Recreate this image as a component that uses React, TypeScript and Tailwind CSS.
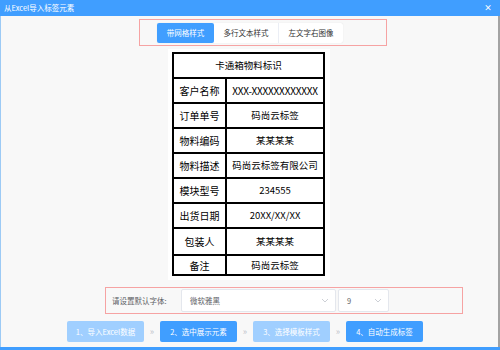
import React from 'react';

const rows: { label: string; value: string; h: string; valueClass?: string }[] = [
  { label: '客户名称', value: 'XXX-XXXXXXXXXXXX', h: 'h-[25px]', valueClass: 'text-[10px] tracking-[-0.2px]' },
  { label: '订单单号', value: '码尚云标签', h: 'h-[25px]' },
  { label: '物料编码', value: '某某某某', h: 'h-[25px]' },
  { label: '物料描述', value: '码尚云标签有限公司', h: 'h-[25px]' },
  { label: '模块型号', value: '234555', h: 'h-[25px]' },
  { label: '出货日期', value: '20XX/XX/XX', h: 'h-[25px]' },
  { label: '包装人', value: '某某某某', h: 'h-[27px]' },
];

const Chevron = () => (
  <svg width="8" height="5" viewBox="0 0 8 5" fill="none" stroke="#c0c4cc" strokeWidth="0.8">
    <path d="M1 1l3 3 3-3" />
  </svg>
);

const steps = [
  { text: '1、导入Excel数据', active: false },
  { text: '2、选中展示元素', active: true },
  { text: '3、选择模板样式', active: false },
  { text: '4、自动生成标签', active: true },
];

export default function App() {
  return (
    <div
      className="w-[500px] h-[350px] flex flex-col bg-[#f8f8f8] overflow-hidden"
      style={{ fontFamily: '"Noto Sans CJK SC", "Noto Sans", sans-serif' }}
    >
      <div className="h-[16px] shrink-0 bg-[#409eff] flex items-center justify-between pl-[4px] pr-[8px]">
        <span className="text-white text-[7.5px] leading-none">从Excel导入标签元素</span>
        <span className="text-white text-[8px] font-bold leading-none">×</span>
      </div>

      <div className="flex-1 flex flex-col border-l border-l-[#9ccaf5] border-r-2 border-r-[#a3a3a3]">
        {/* template style tabs */}
        <div className="mt-[3px] ml-[138px] w-[248px] h-[27px] border border-[#f6a3a3] flex items-start pt-[3px] pl-[17px]">
          <div className="flex bg-white rounded-[2px] shadow-[0_0_1px_rgba(0,0,0,0.15)]">
            <div className="w-[57px] h-[20px] bg-[#409eff] rounded-[2px] flex items-center justify-center text-white text-[7.5px]">
              带网格样式
            </div>
            <div className="w-[65px] h-[20px] border-r border-[#ebeef5] flex items-center justify-center text-[#333] text-[7.5px]">
              多行文本样式
            </div>
            <div className="w-[64px] h-[20px] flex items-center justify-center text-[#333] text-[7.5px]">
              左文字右图像
            </div>
          </div>
        </div>

        {/* label preview */}
        <div className="mt-[3px] ml-[167px] w-[162px] h-[231px] bg-white pt-[3px] pl-[4px]">
          <div className="w-[153px] border-2 border-black text-black">
            <div className="h-[25px] border-b-2 border-black flex items-center justify-center text-[9.5px]">
              卡通箱物料标识
            </div>
            {rows.map((r) => (
              <div key={r.label} className={`${r.h} border-b-2 border-black flex`}>
                <div className="w-[53px] border-r-2 border-black flex items-center justify-center text-[10px]">
                  {r.label}
                </div>
                <div className={`flex-1 flex items-center justify-center whitespace-nowrap ${r.valueClass ?? 'text-[9.5px]'}`}>
                  {r.value}
                </div>
              </div>
            ))}
            <div className="h-[18px] flex">
              <div className="w-[53px] border-r-2 border-black flex items-center justify-center text-[10px]">备注</div>
              <div className="flex-1 flex items-center justify-center text-[9.5px]">码尚云标签</div>
            </div>
          </div>
        </div>

        {/* default font */}
        <div className="mt-[7px] ml-[104px] w-[358px] h-[27px] border border-[#f6a3a3] flex items-center pl-[6px]">
          <span className="w-[69px] text-[7.5px] text-[#606266]">请设置默认字体:</span>
          <div className="w-[155px] h-[23px] bg-white border border-[#e4e7ed] rounded-[2px] flex items-center justify-between pl-[8px] pr-[6px]">
            <span className="text-[7.5px] text-[#606266]">微软雅黑</span>
            <Chevron />
          </div>
          <div className="ml-[2px] w-[51px] h-[23px] bg-white border border-[#e4e7ed] rounded-[2px] flex items-center justify-between pl-[8px] pr-[6px]">
            <span className="text-[7.5px] text-[#606266]">9</span>
            <Chevron />
          </div>
        </div>

        {/* steps */}
        <div className="mt-[7px] ml-[66px] flex items-center">
          {steps.map((s, i) => (
            <React.Fragment key={s.text}>
              {i > 0 && (
                <span className="w-[16px] text-center text-[9px] text-[#c0c4cc] leading-none">»</span>
              )}
              <div
                className={`w-[77px] h-[21px] rounded-[2px] flex items-center justify-center text-white text-[7.5px] ${
                  s.active ? 'bg-[#409eff]' : 'bg-[#a0cfff]'
                }`}
              >
                {s.text}
              </div>
            </React.Fragment>
          ))}
        </div>
      </div>

      <div className="h-[3px] shrink-0 bg-[#409eff]" />
    </div>
  );
}
